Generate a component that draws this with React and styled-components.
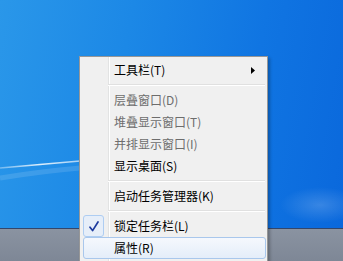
import React from "react";
import styled, { createGlobalStyle } from "styled-components";

const GlobalStyle = createGlobalStyle`
  html, body { margin: 0; padding: 0; }
  body { width: 343px; height: 261px; overflow: hidden; font-family: "Noto Sans CJK SC", "Noto Sans", sans-serif; }
`;

const Screen = styled.div`
  position: relative;
  width: 343px;
  height: 261px;
  display: flex;
  flex-direction: column;
  overflow: hidden;
`;

const Desktop = styled.div`
  flex: 1;
  background: linear-gradient(100deg, #2a97e9 0%, #1c88e6 35%, #1075e2 70%, #0a68dc 100%);
  svg { display: block; width: 100%; height: 100%; }
`;

const Taskbar = styled.div`
  height: 32px;
  flex: none;
  border-top: 1px solid #34466a;
  background: linear-gradient(#8a93a1, #7e8796);
`;

const Menu = styled.div`
  position: absolute;
  left: 79px;
  top: 56px;
  width: 189px;
  box-sizing: border-box;
  border: 1px solid #979797;
  padding: 2px 1px 3px 3px;
  background: linear-gradient(to right, #f0f0f0 0 28px, #e2e3e3 28px 29px, #ffffff 29px 30px, #f0f0f0 30px);
  box-shadow: 2px 2px 3px rgba(0, 0, 0, 0.25);
  display: flex;
  flex-direction: column;
`;

const Item = styled.div`
  position: relative;
  height: 22px;
  line-height: 22px;
  box-sizing: border-box;
  padding-left: 31px;
  font-size: 12px;
  color: ${(p) => (p.$disabled ? "#6d6d6d" : "#000")};
  border: 1px solid ${(p) => (p.$hover ? "#a9c7ec" : "transparent")};
  border-radius: 3px;
  background: ${(p) => (p.$hover ? "linear-gradient(#f5f8fd, #e4edf9)" : "transparent")};
  display: flex;
  align-items: center;
  white-space: nowrap;
`;

const Label = styled.span`
  flex: 1;
  margin-left: -1px;
`;

const Arrow = styled.svg`
  width: 4px;
  height: 7px;
  margin-right: 10px;
`;

const CheckBox = styled.div`
  position: absolute;
  left: -1px;
  top: -1px;
  width: 21px;
  height: 22px;
  box-sizing: border-box;
  border: 1px solid #aecdf2;
  border-radius: 3px;
  background: #e6eef9;
  display: flex;
  align-items: center;
  justify-content: center;
`;

const Separator = styled.div`
  height: 8px;
  margin-left: 25px;
  margin-right: 1px;
  display: flex;
  flex-direction: column;
  justify-content: center;
  &::before {
    content: "";
    display: block;
    height: 1px;
    background: #e0e0e0;
  }
  &::after {
    content: "";
    display: block;
    height: 1px;
    background: #ffffff;
  }
`;

export default function App() {
  return (
    <>
      <GlobalStyle />
      <Screen>
        <Desktop>
          <svg viewBox="0 0 343 228" preserveAspectRatio="none">
            <defs>
              <linearGradient id="streak" x1="0" x2="1" y1="0" y2="0">
                <stop offset="0" stopColor="#ffffff" stopOpacity="0.35" />
                <stop offset="0.5" stopColor="#ffffff" stopOpacity="0.85" />
                <stop offset="1" stopColor="#ffffff" stopOpacity="0.6" />
              </linearGradient>
              <radialGradient id="glow" cx="0.5" cy="0.5" r="0.5">
                <stop offset="0" stopColor="#ffffff" stopOpacity="0.18" />
                <stop offset="1" stopColor="#ffffff" stopOpacity="0" />
              </radialGradient>
            </defs>
            <path d="M0 168 C 25 166, 55 163, 80 161" stroke="url(#streak)" strokeWidth="1.6" fill="none" />
            <path d="M0 178 C 25 174, 55 170, 80 168" stroke="#ffffff" strokeOpacity="0.12" strokeWidth="5" fill="none" />
            <ellipse cx="320" cy="205" rx="40" ry="18" fill="url(#glow)" />
          </svg>
        </Desktop>
        <Taskbar />
        <Menu>
          <Item>
            <Label>工具栏(T)</Label>
            <Arrow viewBox="0 0 4 7">
              <path d="M0 0 L4 3.5 L0 7 Z" fill="#000" />
            </Arrow>
          </Item>
          <Separator />
          <Item $disabled>
            <Label>层叠窗口(D)</Label>
          </Item>
          <Item $disabled>
            <Label>堆叠显示窗口(T)</Label>
          </Item>
          <Item $disabled>
            <Label>并排显示窗口(I)</Label>
          </Item>
          <Item>
            <Label>显示桌面(S)</Label>
          </Item>
          <Separator />
          <Item>
            <Label>启动任务管理器(K)</Label>
          </Item>
          <Separator />
          <Item>
            <CheckBox>
              <svg width="10" height="11" viewBox="0 0 10 11">
                <path d="M1 6.2 L3.6 9.6 L9 1" stroke="#1c3a9e" strokeWidth="1.7" fill="none" strokeLinecap="round" strokeLinejoin="round" />
              </svg>
            </CheckBox>
            <Label>锁定任务栏(L)</Label>
          </Item>
          <Item $hover>
            <Label>属性(R)</Label>
          </Item>
        </Menu>
      </Screen>
    </>
  );
}
